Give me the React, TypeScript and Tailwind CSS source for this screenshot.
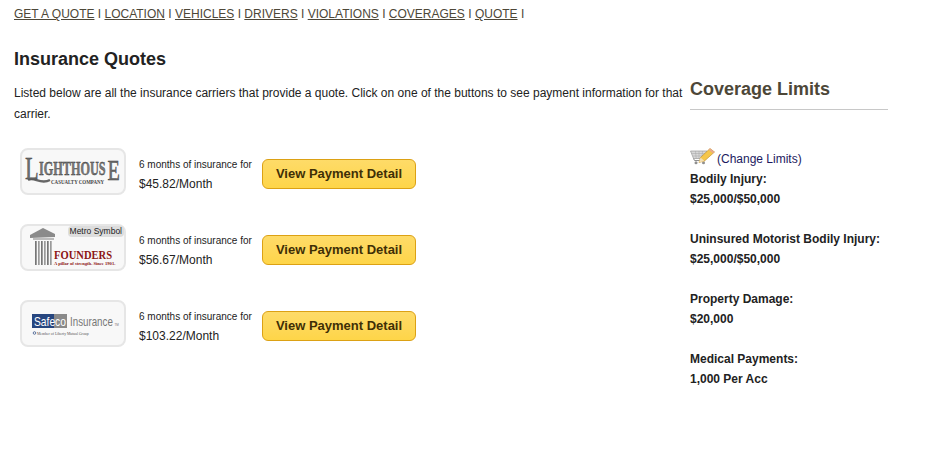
import React from "react";

const navItems = ["GET A QUOTE", "LOCATION", "VEHICLES", "DRIVERS", "VIOLATIONS", "COVERAGES", "QUOTE"];

const LighthouseLogo = () => (
    <svg width="102" height="43" viewBox="0 0 102 43">
        <path d="M6 30 C12 26 18 35 28 30" fill="none" stroke="#666" strokeWidth="2.5" />
        <text transform="translate(3 29) scale(0.7 1)" fontFamily="Liberation Serif, serif" fontSize="32" fill="#6f6f6f" stroke="#333" strokeWidth="0.4">L</text>
        <text transform="translate(17 24.5) scale(0.68 1)" fontFamily="Liberation Serif, serif" fontSize="18" fontWeight="700" fill="#7a7a7a" stroke="#333" strokeWidth="0.4">IGHTHOUS</text>
        <text transform="translate(85.5 30) scale(0.7 1)" fontFamily="Liberation Serif, serif" fontSize="29" fill="#6f6f6f" stroke="#333" strokeWidth="0.4">E</text>
        <text transform="translate(29 33.5) scale(0.9 1)" fontFamily="Liberation Serif, serif" fontSize="5.5" fontWeight="700" fill="#444">CASUALTY COMPANY</text>
    </svg>
);

const FoundersLogo = () => (
    <svg width="102" height="43" viewBox="0 0 102 43">
        <path d="M8 9 L21 2 L33 8 L33 11 L8 12 Z" fill="#8a8a8a" />
        <rect x="11" y="12" width="21" height="2" fill="#bbb" />
        {[13, 16, 19, 22, 25, 28].map((x) => (
            <rect key={x} x={x} y="15" width="1.7" height="24" fill={x % 2 ? "#777" : "#9a9a9a"} />
        ))}
        <text transform="translate(32 33) scale(0.88 1)" fontFamily="Liberation Serif, serif" fontSize="12" fontWeight="700" fill="#8c1414">FOUNDERS</text>
        <text transform="translate(32 38.5) scale(1.15 1)" fontFamily="Liberation Serif, serif" fontSize="4" fontWeight="700" fill="#8c1414">A pillar of strength. Since 1901.</text>
    </svg>
);

const SafecoLogo = () => (
    <svg width="102" height="43" viewBox="0 0 102 43">
        <rect x="10" y="12" width="22" height="14" fill="#27467f" />
        <rect x="32" y="12" width="13" height="14" fill="#8a8a8a" />
        <text transform="translate(12 24) scale(0.79 1)" fontFamily="Liberation Sans, sans-serif" fontSize="13" fill="#fff">Safeco</text>
        <text transform="translate(48 24) scale(0.75 1)" fontFamily="Liberation Sans, sans-serif" fontSize="13" fill="#777">Insurance</text>
        <text x="92.5" y="24" fontFamily="Liberation Sans, sans-serif" fontSize="3" fill="#777">TM</text>
        <circle cx="12.5" cy="31" r="1.3" fill="none" stroke="#27467f" strokeWidth="0.7" />
        <text transform="translate(15 32.5) scale(0.95 1)" fontFamily="Liberation Serif, serif" fontSize="4" fill="#555">Member of Liberty Mutual Group</text>
    </svg>
);

const CartPencilIcon = () => (
    <svg width="25" height="18" viewBox="0 0 25 18" className="shrink-0 -mt-[2px]">
        <path d="M0.5 4 H17 L15 11.5 H3.5 Z" fill="#d8d8d8" stroke="#9a9a9a" strokeWidth="0.7" />
        <path d="M2 6.5 H16 M3 9 H15.5 M5.5 4 L6.2 11.5 M9 4 V11.5 M12.5 4 L12 11.5" stroke="#a5a5a5" strokeWidth="0.5" />
        <path d="M3.5 11.5 L4.5 13.5 H15" fill="none" stroke="#8f8f8f" strokeWidth="1" />
        <circle cx="6" cy="15.7" r="1.5" fill="#8f8f8f" />
        <circle cx="13.5" cy="15.7" r="1.5" fill="#8f8f8f" />
        <path d="M9 15.5 L10.5 10.5 L20 1.5 L24.5 5 L14.5 14 Z" fill="#f5c64a" stroke="#b98a2a" strokeWidth="0.6" />
        <path d="M9 15.5 L10.5 10.5 L14.5 14 Z" fill="#f3dfb5" />
        <path d="M20 1.5 L24.5 5 L23 6.3 L18.6 2.8 Z" fill="#e9a78f" />
    </svg>
);

const quotes = [
    { logo: <LighthouseLogo />, price: "$45.82/Month", symbol: false },
    { logo: <FoundersLogo />, price: "$56.67/Month", symbol: true },
    { logo: <SafecoLogo />, price: "$103.22/Month", symbol: false },
];

const limits = [
    { label: "Bodily Injury:", value: "$25,000/$50,000" },
    { label: "Uninsured Motorist Bodily Injury:", value: "$25,000/$50,000" },
    { label: "Property Damage:", value: "$20,000" },
    { label: "Medical Payments:", value: "1,000 Per Acc" },
];

const App = () => {
    return (
        <div className="w-[947px] h-[451px] overflow-hidden bg-white text-[12px] text-[#222] font-['Liberation_Sans',Arial,sans-serif]">
            <div className="pl-[14px] pt-[6px] leading-[16px] text-[#4d4738]">
                {navItems.map((item) => (
                    <span key={item}>
                        <a href="#" className="underline">{item}</a>{" I "}
                    </span>
                ))}
            </div>

            <div className="flex">
                <div className="w-[690px] shrink-0 pl-[14px] pr-[6px]">
                    <h1 className="mt-[25px] text-[18px] leading-[24px] font-bold">Insurance Quotes</h1>
                    <p className="mt-[12px] leading-[21px]">
                        Listed below are all the insurance carriers that provide a quote. Click on one of the buttons to see payment information for that carrier.
                    </p>
                    <div className="mt-[23px] flex flex-col gap-[29px] pl-[6px]">
                        {quotes.map((q) => (
                            <div key={q.price} className="flex items-center">
                                <div className="relative w-[106px] h-[47px] shrink-0 flex items-center justify-center rounded-[8px] border-2 border-[#e6e6e6] bg-[#f8f8f8]">
                                    {q.logo}
                                    {q.symbol && (
                                        <span className="absolute top-0 right-0 rounded-[4px] bg-[#dddddd] px-[2px] text-[8.5px] leading-[11px]">Metro Symbol</span>
                                    )}
                                </div>
                                <div className="ml-[13px] w-[123px] shrink-0 mt-[5px]">
                                    <div className="text-[10px] leading-[14px]">6 months of insurance for</div>
                                    <div className="mt-[5px] leading-[14px]">{q.price}</div>
                                </div>
                                <button className="mt-[4px] w-[154px] h-[30px] rounded-[6px] border border-[#dca114] bg-gradient-to-b from-[#fedb68] to-[#fed548] text-[13px] font-bold text-[#3f2f06]">
                                    View Payment Detail
                                </button>
                            </div>
                        ))}
                    </div>
                </div>

                <div className="w-[198px] shrink-0">
                    <h2 className="mt-[55px] pb-[8px] border-b border-[#c8c8c8] text-[18px] leading-[24px] font-bold text-[#4d4738]">Coverage Limits</h2>
                    <div className="mt-[37px] flex items-center gap-[2px] h-[20px]">
                        <CartPencilIcon />
                        <a href="#" className="text-[#1c1a5e] mt-[3px]">(Change Limits)</a>
                    </div>
                    <div className="flex flex-col gap-[20px] mt-[2px] font-bold">
                        {limits.map((l) => (
                            <div key={l.label} className="leading-[20px]">
                                <div>{l.label}</div>
                                <div>{l.value}</div>
                            </div>
                        ))}
                    </div>
                </div>
            </div>
        </div>
    );
};

export default App;
